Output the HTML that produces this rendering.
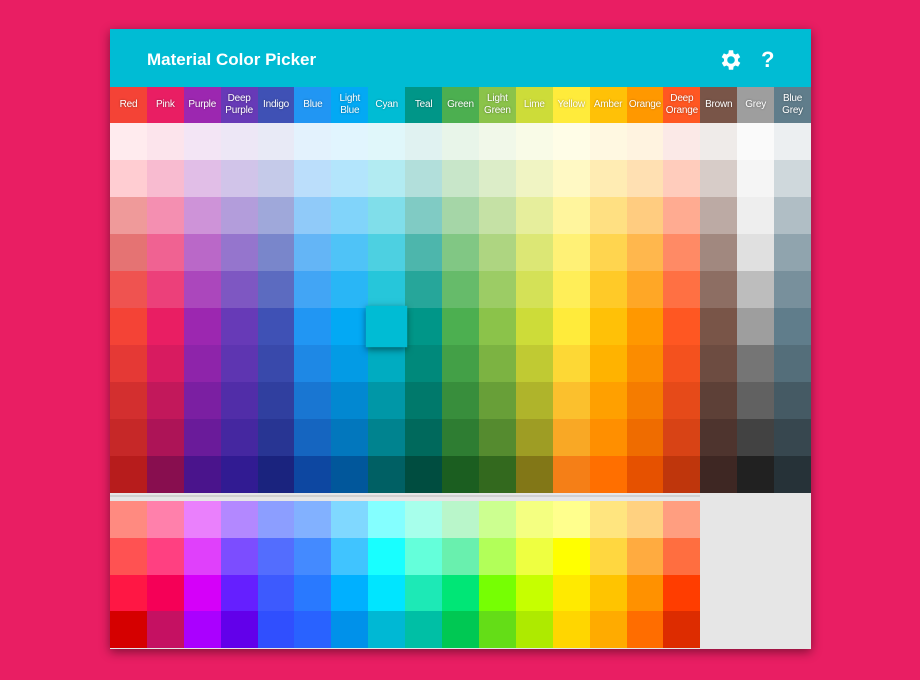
<!DOCTYPE html><html><head><style>
body{margin:0;width:920px;height:680px;background:#E91E63;font-family:"Liberation Sans",sans-serif;overflow:hidden}
#card{position:absolute;left:110px;top:29px;width:701px;height:620px;background:#e6e6e6;box-shadow:0 3px 10px rgba(0,0,0,.45)}
#hdr{height:58px;background:#00BCD4;position:relative}
#hdr h1{margin:0;position:absolute;left:37px;top:21px;font-size:17px;color:#fff;font-weight:bold}
.g{display:grid;grid-template-columns:repeat(19,1fr)}
.h div{height:36px;display:flex;align-items:center;justify-content:center;text-align:center;font-size:10px;line-height:12px;color:#fff;text-shadow:0 0 2px rgba(0,0,0,.4);letter-spacing:-0.2px}
.g.s div{height:37px}
.g.a div{height:36.75px}
</style></head><body><div id="card"><div id="hdr"><h1>Material Color Picker</h1>
<svg style="position:absolute;left:608px;top:18px" width="26" height="26" viewBox="0 0 24 24"><path fill="#fff" d="M19.4 13a7.5 7.5 0 000-2l2.1-1.6-2-3.5-2.5 1a7 7 0 00-1.7-1L15 3h-4l-.4 2.9a7 7 0 00-1.7 1l-2.5-1-2 3.5L6.6 11a7.5 7.5 0 000 2l-2.1 1.6 2 3.5 2.5-1a7 7 0 001.7 1L11 21h4l.4-2.9a7 7 0 001.7-1l2.5 1 2-3.5zM13 15.5a3.5 3.5 0 110-7 3.5 3.5 0 010 7z" transform="translate(-1 0)"/></svg>
<div style="position:absolute;left:651px;top:18px;color:#fff;font-weight:bold;font-size:22px">?</div></div>
<div id="grid"></div></div>
<script>
const names=["Red","Pink","Purple","Deep<br>Purple","Indigo","Blue","Light<br>Blue","Cyan","Teal","Green","Light<br>Green","Lime","Yellow","Amber","Orange","Deep<br>Orange","Brown","Grey","Blue<br>Grey"];
const S=[
["FFEBEE","FFCDD2","EF9A9A","E57373","EF5350","F44336","E53935","D32F2F","C62828","B71C1C","FF8A80","FF5252","FF1744","D50000"],
["FCE4EC","F8BBD0","F48FB1","F06292","EC407A","E91E63","D81B60","C2185B","AD1457","880E4F","FF80AB","FF4081","F50057","C51162"],
["F3E5F5","E1BEE7","CE93D8","BA68C8","AB47BC","9C27B0","8E24AA","7B1FA2","6A1B9A","4A148C","EA80FC","E040FB","D500F9","AA00FF"],
["EDE7F6","D1C4E9","B39DDB","9575CD","7E57C2","673AB7","5E35B1","512DA8","4527A0","311B92","B388FF","7C4DFF","651FFF","6200EA"],
["E8EAF6","C5CAE9","9FA8DA","7986CB","5C6BC0","3F51B5","3949AB","303F9F","283593","1A237E","8C9EFF","536DFE","3D5AFE","304FFE"],
["E3F2FD","BBDEFB","90CAF9","64B5F6","42A5F5","2196F3","1E88E5","1976D2","1565C0","0D47A1","82B1FF","448AFF","2979FF","2962FF"],
["E1F5FE","B3E5FC","81D4FA","4FC3F7","29B6F6","03A9F4","039BE5","0288D1","0277BD","01579B","80D8FF","40C4FF","00B0FF","0091EA"],
["E0F7FA","B2EBF2","80DEEA","4DD0E1","26C6DA","00BCD4","00ACC1","0097A7","00838F","006064","84FFFF","18FFFF","00E5FF","00B8D4"],
["E0F2F1","B2DFDB","80CBC4","4DB6AC","26A69A","009688","00897B","00796B","00695C","004D40","A7FFEB","64FFDA","1DE9B6","00BFA5"],
["E8F5E9","C8E6C9","A5D6A7","81C784","66BB6A","4CAF50","43A047","388E3C","2E7D32","1B5E20","B9F6CA","69F0AE","00E676","00C853"],
["F1F8E9","DCEDC8","C5E1A5","AED581","9CCC65","8BC34A","7CB342","689F38","558B2F","33691E","CCFF90","B2FF59","76FF03","64DD17"],
["F9FBE7","F0F4C3","E6EE9C","DCE775","D4E157","CDDC39","C0CA33","AFB42B","9E9D24","827717","F4FF81","EEFF41","C6FF00","AEEA00"],
["FFFDE7","FFF9C4","FFF59D","FFF176","FFEE58","FFEB3B","FDD835","FBC02D","F9A825","F57F17","FFFF8D","FFFF00","FFEA00","FFD600"],
["FFF8E1","FFECB3","FFE082","FFD54F","FFCA28","FFC107","FFB300","FFA000","FF8F00","FF6F00","FFE57F","FFD740","FFC400","FFAB00"],
["FFF3E0","FFE0B2","FFCC80","FFB74D","FFA726","FF9800","FB8C00","F57C00","EF6C00","E65100","FFD180","FFAB40","FF9100","FF6D00"],
["FBE9E7","FFCCBC","FFAB91","FF8A65","FF7043","FF5722","F4511E","E64A19","D84315","BF360C","FF9E80","FF6E40","FF3D00","DD2C00"],
["EFEBE9","D7CCC8","BCAAA4","A1887F","8D6E63","795548","6D4C41","5D4037","4E342E","3E2723"],
["FAFAFA","F5F5F5","EEEEEE","E0E0E0","BDBDBD","9E9E9E","757575","616161","424242","212121"],
["ECEFF1","CFD8DC","B0BEC5","90A4AE","78909C","607D8B","546E7A","455A64","37474F","263238"]];
let h='<div class="g h">'+names.map((n,i)=>`<div style="background:#${S[i][5]}">${n}</div>`).join('')+'</div><div class="g s">';
for(let r=0;r<10;r++)for(let c=0;c<19;c++){let st=`background:#${S[c][r]}`;if(c==7&&r==5)st+=';position:relative;z-index:2;transform:scale(1.12);box-shadow:0 2px 6px rgba(0,0,0,.5)';h+=`<div style="${st}"></div>`;}
h+='</div><div style="height:8px;background:#e6e6e6;position:relative"><div style="position:absolute;left:0;width:590px;top:2px;height:2px;background:#d0d0d0"></div></div><div class="g a">';
for(let r=10;r<14;r++)for(let c=0;c<19;c++)h+=`<div style="background:${S[c][r]?'#'+S[c][r]:'#e6e6e6'}"></div>`;
document.getElementById('grid').innerHTML=h+'</div>';
</script></body></html>
